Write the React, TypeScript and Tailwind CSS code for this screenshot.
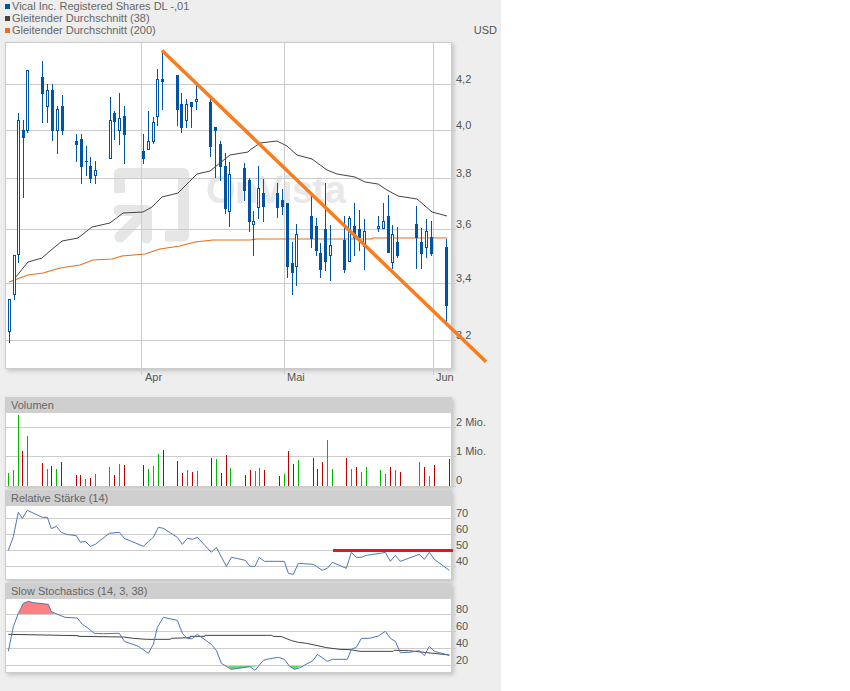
type Pt = [number, number];
type Candle = [number, number, number, number, number, number];

const z = (pts: Pt[], ox: number, oy: number) => pts.map(([x, y]) => `${ox + x / 3},${oy + y / 3}`).join(" ");

const BLUE = "#0054a6";
const GRID = "#cccccc";

// x, wick top, wick bottom, body top, body bottom, filled
const candles: Candle[] = [
  [9, 299, 343, 299, 332, 0], [14, 255, 300, 255, 295, 0], [18, 113, 263, 120, 255, 0], [23, 120, 198, 130, 138, 1],
  [27, 70, 133, 70, 131, 0], [42, 61, 123, 77, 94, 1], [47, 84, 123, 90, 107, 0], [52, 84, 141, 90, 131, 1],
  [57, 106, 154, 109, 131, 0], [62, 95, 135, 106, 131, 1], [76, 134, 162, 141, 145, 1], [81, 134, 184, 139, 167, 1],
  [86, 146, 176, 161, 162, 1], [90, 157, 183, 166, 179, 1], [95, 161, 184, 170, 176, 0], [110, 97, 159, 120, 159, 0],
  [114, 111, 140, 113, 122, 1], [119, 93, 145, 118, 131, 0], [124, 106, 164, 116, 135, 1], [143, 134, 164, 151, 159, 1],
  [148, 111, 150, 141, 150, 0], [153, 117, 144, 122, 142, 0], [157, 69, 126, 79, 117, 0], [162, 51, 110, 79, 82, 1],
  [177, 75, 126, 75, 110, 1], [181, 93, 133, 104, 128, 1], [186, 99, 128, 104, 121, 0], [191, 102, 128, 102, 107, 1],
  [196, 84, 110, 99, 102, 0], [210, 97, 157, 102, 147, 1], [215, 127, 178, 127, 131, 1], [220, 141, 181, 144, 167, 1],
  [225, 153, 214, 166, 209, 1], [229, 162, 227, 174, 212, 0], [244, 163, 201, 168, 191, 1], [249, 178, 232, 180, 222, 1],
  [253, 211, 256, 221, 225, 0], [258, 166, 219, 188, 208, 0], [263, 179, 222, 193, 207, 1], [277, 183, 218, 193, 208, 1],
  [282, 189, 215, 200, 207, 1], [287, 203, 278, 203, 267, 1], [292, 242, 295, 263, 273, 1], [296, 224, 286, 234, 267, 0],
  [311, 196, 248, 216, 239, 1], [316, 218, 256, 226, 251, 1], [320, 243, 278, 253, 270, 1], [325, 183, 271, 229, 262, 1],
  [330, 225, 281, 245, 256, 0], [344, 216, 273, 240, 270, 1], [349, 216, 262, 218, 262, 0], [354, 203, 256, 226, 238, 1],
  [359, 210, 251, 229, 238, 1], [364, 219, 270, 231, 247, 0], [378, 216, 232, 226, 229, 0], [383, 203, 229, 221, 229, 0],
  [388, 195, 253, 216, 253, 1], [392, 225, 269, 234, 263, 0], [397, 227, 258, 242, 256, 1], [416, 206, 269, 224, 238, 1],
  [421, 228, 269, 242, 254, 1], [426, 219, 258, 231, 248, 0], [431, 221, 256, 237, 254, 1], [446, 239, 323, 247, 306, 1],
];

const ma38: Pt[] = [[15, 278], [28, 262], [42, 258], [50, 251], [62, 241], [78, 238], [92, 227], [110, 223], [123, 213], [143, 212], [152, 207], [162, 197], [178, 193], [197, 174], [210, 171], [230, 155], [248, 152], [250, 150], [260, 143], [277, 141], [287, 146], [297, 155], [312, 159], [327, 170], [337, 174], [355, 177], [365, 182], [378, 184], [387, 190], [398, 196], [417, 199], [432, 212], [447, 216]];
const ma200: Pt[] = [[9, 282], [28, 275], [43, 273], [60, 268], [80, 265], [93, 260], [112, 259], [122, 256], [145, 254], [160, 249], [180, 246], [195, 242], [213, 240], [250, 240], [257, 239], [372, 239], [373, 238], [447, 238]];

// zoomed pixel x, top y, 1 = up day
const volA: [number, number, number][] = [[25, 249, 1], [40, 240, 1], [55, 75, 1], [67, 183, 0], [82, 138, 1], [127, 219, 0], [142, 237, 1], [154, 228, 0], [169, 237, 1], [184, 216, 0], [229, 255, 0], [241, 255, 0], [256, 267, 1], [271, 264, 0], [286, 252, 1], [328, 231, 1], [343, 255, 0], [358, 222, 1], [373, 225, 0], [430, 225, 0], [445, 237, 1], [460, 228, 1], [475, 192, 1], [490, 180, 0], [532, 213, 0], [547, 249, 0], [562, 240, 1], [577, 246, 0], [592, 243, 1], [634, 204, 0], [649, 207, 1], [664, 249, 0], [679, 195, 0], [691, 234, 1], [736, 255, 0]];
const volB: [number, number, number][] = [[1, 240, 0], [16, 243, 1], [28, 234, 1], [43, 240, 0], [88, 258, 0], [103, 252, 1], [115, 183, 0], [130, 222, 0], [145, 210, 1], [190, 204, 0], [202, 237, 0], [217, 216, 0], [232, 150, 1], [247, 237, 1], [289, 204, 0], [304, 237, 1], [319, 231, 0], [334, 246, 1], [349, 231, 1], [391, 240, 1], [406, 252, 1], [421, 231, 0], [436, 240, 1], [451, 246, 0], [508, 216, 1], [523, 231, 0], [538, 258, 1], [553, 225, 0], [598, 207, 0]];

const rsiA: Pt[] = [[25, 196], [40, 155], [55, 82], [67, 100], [82, 76], [127, 97], [142, 97], [154, 131], [169, 124], [184, 142], [199, 148], [229, 152], [241, 172], [256, 169], [271, 184], [286, 178], [301, 166], [328, 145], [358, 142], [373, 160], [430, 184], [445, 170], [460, 157], [475, 127], [490, 130], [532, 157], [547, 178], [562, 160], [577, 163], [592, 157], [634, 202], [649, 187], [679, 244], [694, 217], [709, 220], [736, 226], [750, 244]];
const rsiB: Pt[] = [[0, 244], [15, 244], [28, 217], [43, 229], [103, 229], [115, 265], [130, 268], [145, 235], [190, 238], [217, 256], [232, 250], [247, 232], [289, 250], [304, 202], [319, 217], [334, 217], [349, 211], [391, 205], [406, 202], [421, 229], [436, 211], [451, 229], [508, 208], [523, 223], [538, 202], [553, 223], [598, 256]];

const stoA: Pt[] = [[25, 214], [40, 140], [55, 100], [70, 70], [85, 64], [100, 68], [145, 73], [154, 95], [180, 106], [195, 112], [232, 114], [247, 133], [262, 143], [283, 160], [310, 161], [358, 160], [373, 184], [415, 199], [445, 220], [460, 193], [472, 142], [490, 112], [532, 121], [547, 160], [562, 176], [577, 176], [592, 163], [634, 193], [649, 211], [664, 250], [694, 268], [750, 260]];
const stoB: Pt[] = [[0, 260], [15, 271], [40, 241], [55, 237], [85, 232], [103, 238], [118, 258], [133, 268], [148, 264], [190, 241], [202, 223], [232, 244], [247, 238], [292, 238], [304, 208], [319, 202], [334, 175], [358, 175], [385, 168], [406, 154], [421, 175], [436, 184], [451, 218], [478, 217], [508, 212], [523, 227], [538, 199], [553, 214], [598, 226]];
const sigA: Pt[] = [[25, 163], [235, 167], [235, 169], [370, 171], [400, 175], [440, 178], [510, 178], [515, 175], [570, 173], [570, 169], [615, 169], [615, 166], [750, 166]];
const sigB: Pt[] = [[0, 166], [65, 166], [70, 169], [95, 170], [125, 182], [145, 187], [170, 190], [230, 203], [270, 208], [300, 209], [330, 214], [430, 214], [433, 211], [475, 212], [598, 225]];

function HGrid({ ys }: { ys: number[] }) {
  return (
    <>
      {ys.map((y) => (
        <rect key={y} x={6} y={y} width={450} height={1} fill={GRID} shapeRendering="crispEdges" />
      ))}
    </>
  );
}

function Axis({ top, ticks }: { top: number; ticks: [string, number][] }) {
  return (
    <div className="relative w-[50px] text-[11px] leading-3 text-[#555]">
      {ticks.map(([label, y]) => (
        <span key={label} className="absolute left-[4px] whitespace-nowrap" style={{ top: y - top - 6 }}>
          {label}
        </span>
      ))}
    </div>
  );
}

function SubPanel({ title, top, ticks, children }: { title: string; top: number; ticks: [string, number][]; children: React.ReactNode }) {
  return (
    <div className="flex mt-[3px]">
      <div className="relative z-10 w-[447px] shadow-[2px_2px_4px_rgba(0,0,0,0.18)]">
        <div className="h-4 bg-[#cfcfcf] pl-[6px] text-[11px] leading-4 text-[#666]">{title}</div>
        <div className="bg-white border-x border-b border-[#cccccc]">
          <svg width={445} height={73} viewBox={`6 ${top + 16} 445 73`} className="block overflow-visible">
            {children}
          </svg>
        </div>
      </div>
      <Axis top={top} ticks={ticks} />
    </div>
  );
}

function LegendRow({ color, label }: { color: string; label: string }) {
  return (
    <div className="flex items-center h-3">
      <span className="w-[3px] h-[3px] mr-[3px] ml-[1px] outline outline-[0.5px]" style={{ background: color, outlineColor: color }} />
      <span>{label}</span>
    </div>
  );
}

export default function App() {
  return (
    <div className="w-[850px] h-[691px] bg-white font-['Liberation_Sans',Arial,sans-serif]">
      <div className="w-[501px] h-[691px] bg-[#eeeeee] pl-[5px] overflow-hidden">
        <div className="h-[42px] text-[11px] leading-3 text-[#666]">
          <LegendRow color={BLUE} label="Vical Inc. Registered Shares DL -,01" />
          <LegendRow color="#444444" label="Gleitender Durchschnitt (38)" />
          <div className="flex justify-between pr-[4px]">
            <LegendRow color="#e8701a" label="Gleitender Durchschnitt (200)" />
            <span className="text-[#555]">USD</span>
          </div>
        </div>

        <div className="flex">
          <div className="relative z-10 w-[447px] h-[327px] bg-white border border-[#cccccc] shadow-[2px_2px_4px_rgba(0,0,0,0.18)]">
            <svg width={445} height={325} viewBox="6 43 445 325" className="block overflow-visible">
              <g stroke="#e6e6e6" strokeWidth={11} fill="none" strokeLinejoin="round">
                <path d="M119.5 193V173.5H183.5V236H165" />
                <path d="M119 210.5H146.5V238" strokeLinecap="round" />
                <path d="M120 237L143 214" strokeLinecap="round" />
              </g>
              <text x={206} y={203} fontSize={38} fontWeight={700} fill="#e8e8e8" letterSpacing={-0.5}>
                OnVista
              </text>
              <HGrid ys={[84, 130, 178, 229, 283, 340]} />
              {[141, 284, 433].map((x) => (
                <rect key={x} x={x} y={43} width={1} height={332} fill={GRID} shapeRendering="crispEdges" />
              ))}
              <polyline points={ma38.map((p) => p.join(",")).join(" ")} fill="none" stroke="#444444" strokeWidth={1} />
              <polyline points={ma200.map((p) => p.join(",")).join(" ")} fill="none" stroke="#e2701f" strokeWidth={1.2} />
              <g shapeRendering="crispEdges">
                {candles.map(([x, wt, wb, bt, bb, filled]) => (
                  <g key={x}>
                    <rect x={x} y={wt} width={1} height={wb - wt} fill={BLUE} />
                    <rect x={x - 1} y={bt} width={3} height={bb - bt} fill={BLUE} />
                    {!filled && <rect x={x} y={bt + 1} width={1} height={bb - bt - 2} fill="#ffffff" />}
                  </g>
                ))}
              </g>
              <line x1={162} y1={50.5} x2={486} y2={361.7} stroke="#f97c1e" strokeWidth={3.5} />
            </svg>
          </div>
          <Axis top={42} ticks={[["4,2", 79], ["4,0", 125], ["3,8", 173], ["3,6", 224], ["3,4", 278], ["3,2", 335]]} />
        </div>

        <div className="relative h-[25px] text-[11px] leading-3 text-[#555]">
          <span className="absolute left-[140px] top-[2px]">Apr</span>
          <span className="absolute left-[282px] top-[2px]">Mai</span>
          <span className="absolute left-[431px] top-[2px]">Jun</span>
        </div>

        <SubPanel title="Volumen" top={397} ticks={[["2 Mio.", 422], ["1 Mio.", 451], ["0", 480]]}>
          <HGrid ys={[427, 456]} />
          <g shapeRendering="crispEdges">
            {volA.map(([x, t, up]) => (
              <rect key={x} x={Math.floor(x / 3)} y={390 + t / 3} width={1} height={486 - 390 - t / 3} fill={up ? "#00b900" : "#bb0000"} />
            ))}
            {volB.map(([x, t, up]) => (
              <rect key={x} x={250 + Math.floor(x / 3)} y={390 + t / 3} width={1} height={486 - 390 - t / 3} fill={up ? "#00b900" : "#bb0000"} />
            ))}
          </g>
          <rect x={452} y={486} width={4} height={1} fill={GRID} shapeRendering="crispEdges" />
        </SubPanel>

        <SubPanel title="Relative Stärke (14)" top={490} ticks={[["70", 513], ["60", 529], ["50", 545], ["40", 561]]}>
          <HGrid ys={[518, 534, 550, 566]} />
          <polyline points={z(rsiA, 0, 485)} fill="none" stroke="#4f76b5" strokeWidth={1} />
          <polyline points={z(rsiB, 250, 485)} fill="none" stroke="#4f76b5" strokeWidth={1} />
          <rect x={333} y={549} width={120} height={3} fill="#e8141e" shapeRendering="crispEdges" />
        </SubPanel>

        <SubPanel title="Slow Stochastics (14, 3, 38)" top={583} ticks={[["80", 609], ["60", 626], ["40", 643], ["20", 660]]}>
          <polygon points={z([[55, 102], [70, 70], [85, 64], [100, 68], [145, 73], [154, 95], [165, 102]], 0, 580)} fill="#ff8080" />
          <polygon points={z([[680, 256], [694, 268], [750, 260], [765, 260], [780, 256]], 0, 580)} fill="#66d966" />
          <polygon points={z([[115, 256], [133, 268], [160, 256]], 250, 580)} fill="#66d966" />
          <HGrid ys={[614, 631, 648, 665]} />
          <polyline points={z(sigA, 0, 580)} fill="none" stroke="#444444" strokeWidth={1} />
          <polyline points={z(sigB, 250, 580)} fill="none" stroke="#444444" strokeWidth={1} />
          <polyline points={z(stoA, 0, 580)} fill="none" stroke="#4f76b5" strokeWidth={1} />
          <polyline points={z(stoB, 250, 580)} fill="none" stroke="#4f76b5" strokeWidth={1} />
        </SubPanel>
      </div>
    </div>
  );
}
